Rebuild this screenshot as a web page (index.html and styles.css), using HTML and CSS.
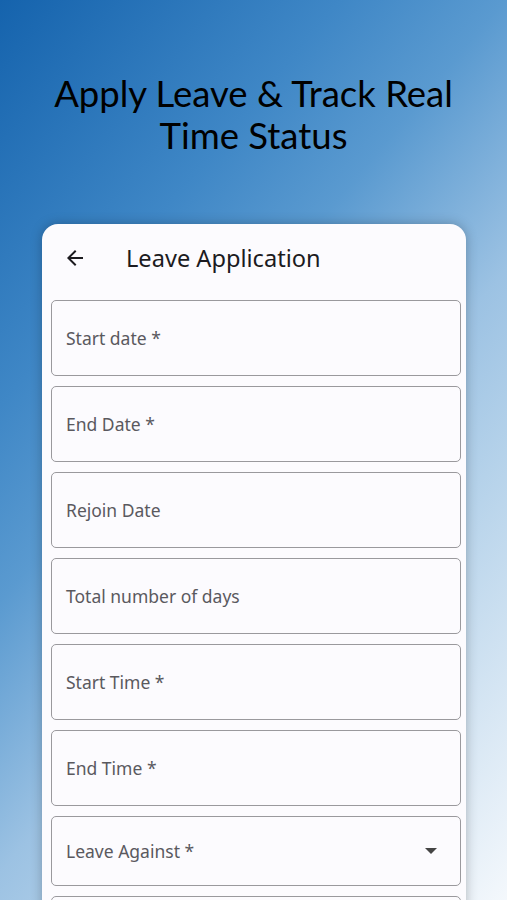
FILE: index.html
```html
<!DOCTYPE html>
<html>
<head>
<meta charset="utf-8">
<link rel="stylesheet" href="styles.css">
</head>
<body>
<div class="screen">
  <h1 class="headline">Apply Leave &amp; Track Real<br>Time Status</h1>
  <div class="card">
    <div class="appbar">
      <svg class="back" width="24" height="24" viewBox="0 0 24 24"><path d="M20 11H7.83l5.59-5.59L12 4l-8 8 8 8 1.41-1.41L7.83 13H20v-2z" fill="#1c1b1f"/></svg>
      <span class="appbar-title">Leave Application</span>
    </div>
    <div class="fields">
      <div class="field"><span class="label">Start date *</span></div>
      <div class="field"><span class="label">End Date *</span></div>
      <div class="field"><span class="label">Rejoin Date</span></div>
      <div class="field"><span class="label">Total number of days</span></div>
      <div class="field"><span class="label">Start Time *</span></div>
      <div class="field"><span class="label">End Time *</span></div>
      <div class="field field-select"><span class="label">Leave Against *</span>
        <svg class="caret" width="12" height="6" viewBox="0 0 12 6"><path d="M0 0h12L6 6z" fill="#444"/></svg>
      </div>
      <div class="field"></div>
    </div>
  </div>
</div>
</body>
</html>
```

FILE: styles.css
```css
html, body {
  margin: 0;
  padding: 0;
}
body {
  width: 507px;
  height: 900px;
  overflow: hidden;
}
.screen {
  width: 507px;
  height: 900px;
  background: linear-gradient(130deg, #1563ad 0%, #3f87c6 27%, #5a9ad0 40%, #9cc2e3 58%, #b5d2ea 70%, #f4f8fc 100%);
  display: flex;
  flex-direction: column;
  align-items: stretch;
  overflow: hidden;
}
.headline {
  margin: 72px 0 0;
  text-align: center;
  font-family: Lato, "Open Sans", sans-serif;
  font-weight: 400;
  font-size: 36.5px;
  line-height: 42px;
  color: #000;
}
.card {
  margin: 68px 41px 0 42px;
  background: #fcfbfe;
  border-radius: 16px 16px 0 0;
  box-shadow: 0 0 12px rgba(0, 0, 0, 0.25);
  padding: 0 5px 0 9px;
  flex: 1;
}
.appbar {
  height: 76px;
  display: flex;
  align-items: center;
  padding-left: 12px;
  padding-bottom: 9px;
  box-sizing: border-box;
}
.back {
  display: block;
}
.appbar-title {
  margin-left: 39px;
  font-family: "Noto Sans", sans-serif;
  font-size: 23.6px;
  color: #1c1b1f;
}
.fields {
  display: flex;
  flex-direction: column;
  gap: 10px;
}
.field {
  height: 76px;
  border: 1.5px solid #9a999d;
  border-radius: 5px;
  display: flex;
  align-items: center;
  justify-content: space-between;
  padding: 0 23px 0 14px;
  box-sizing: border-box;
  flex-shrink: 0;
}
.field-select {
  height: 70px;
}
.label {
  font-family: "Noto Sans", sans-serif;
  font-size: 17.5px;
  color: #5a595e;
}
.caret {
  display: block;
}
```
